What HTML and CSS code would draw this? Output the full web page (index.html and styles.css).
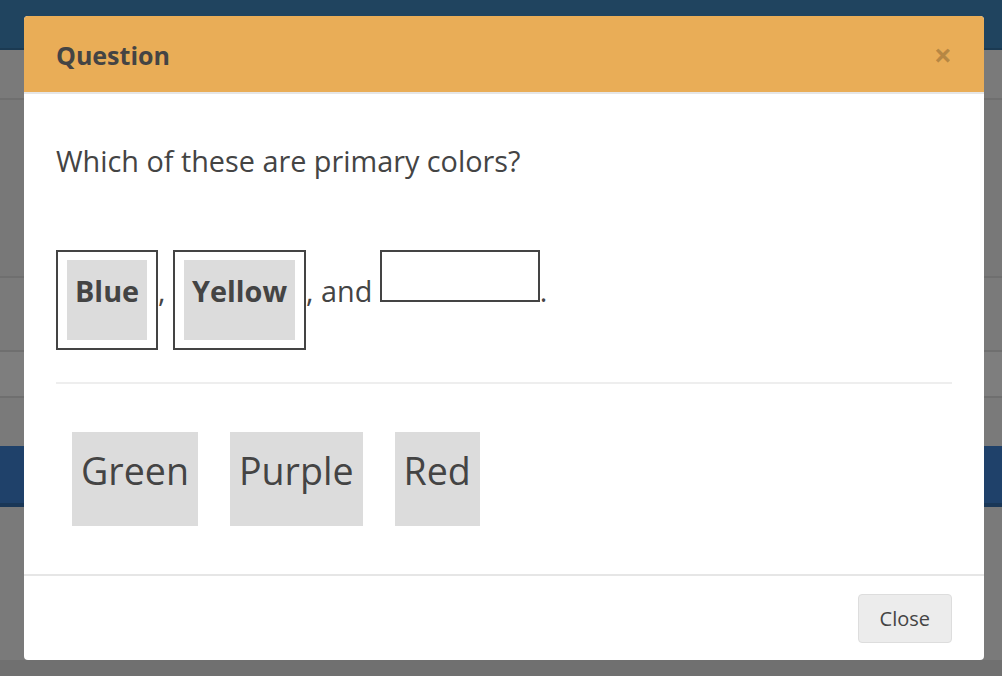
FILE: index.html
```html
<!DOCTYPE html>
<html lang="en">
<head>
<meta charset="utf-8">
<title>Question</title>
<link rel="stylesheet" href="styles.css">
</head>
<body>
<div class="page">
  <div class="stripe nav"></div>
  <div class="stripe nav-edge"></div>
  <div class="stripe row row-a"></div>
  <div class="stripe line"></div>
  <div class="stripe row row-b"></div>
  <div class="stripe line"></div>
  <div class="stripe row row-c"></div>
  <div class="stripe line"></div>
  <div class="stripe row row-d"></div>
  <div class="stripe line"></div>
  <div class="stripe row row-e"></div>
  <div class="stripe band"></div>
  <div class="stripe band-edge"></div>
  <div class="stripe row row-f"></div>
  <div class="stripe row-g"></div>
</div>

<div class="modal">
  <div class="modal-header">
    <h4 class="modal-title">Question</h4>
    <button class="close" type="button">×</button>
  </div>
  <div class="modal-body">
    <p class="question">Which of these are primary colors?</p>
    <div class="blanks"><span class="drop"><span class="chip chip-sm">Blue</span></span>, <span class="drop"><span class="chip chip-sm">Yellow</span></span>, and <span class="drop drop-empty"></span>.</div>
    <hr class="divider">
    <div class="options">
      <span class="chip chip-lg">Green</span>
      <span class="chip chip-lg">Purple</span>
      <span class="chip chip-lg">Red</span>
    </div>
  </div>
  <div class="modal-footer">
    <button class="btn" type="button">Close</button>
  </div>
</div>
</body>
</html>
```

FILE: styles.css
```css
html, body {
  margin: 0;
  padding: 0;
}

body {
  width: 1002px;
  height: 676px;
  overflow: hidden;
  font-family: "Open Sans", "Noto Sans", "Liberation Sans", sans-serif;
  color: #444444;
  background: #7a7a7a;
}

/* dimmed page behind the modal */
.page {
  display: flex;
  flex-direction: column;
  height: 676px;
}

.stripe { flex: none; }
.nav { height: 48px; background: #20445f; }
.nav-edge { height: 2px; background: #1b3a52; }
.line { height: 2px; background: #6f6f6f; }
.row { background: #7a7a7a; }
.row-a { height: 48px; }
.row-b { height: 176px; background: #787878; }
.row-c { height: 72px; background: #7a7a7a; }
.row-d { height: 44px; background: #7e7e7e; }
.row-e { height: 48px; }
.band { height: 57px; background: #1f416a; }
.band-edge { height: 4px; background: #1a3757; }
.row-f { height: 153px; }
.row-g { height: 16px; background: #707070; }

/* modal */
.modal {
  position: absolute;
  left: 24px;
  top: 16px;
  width: 960px;
  background: #ffffff;
  border-radius: 4px;
  overflow: hidden;
}

.modal-header {
  height: 78px;
  box-sizing: border-box;
  padding: 1px 32px 0 32px;
  background: #e9ad57;
  border-bottom: 2px solid #e6e6e6;
  display: flex;
  align-items: center;
  justify-content: space-between;
}

.modal-title {
  margin: 0;
  font-size: 25px;
  font-weight: 700;
  line-height: 34px;
  color: #444444;
}

.close {
  border: 0;
  background: none;
  padding: 0;
  margin-top: 0;
  font-family: "Open Sans", "DejaVu Sans", sans-serif;
  font-size: 32px;
  font-weight: 700;
  line-height: 32px;
  color: rgba(0, 0, 0, 0.22);
  cursor: pointer;
}

.modal-body {
  padding: 46px 32px 48px;
}

.question {
  margin: 0 0 69px;
  font-size: 28.8px;
  line-height: 41px;
}

.blanks {
  font-size: 28.8px;
  line-height: 41px;
}

.drop {
  display: inline-block;
  border: 2px solid #444444;
  padding: 8px 9px;
  vertical-align: baseline;
}

.drop-empty {
  padding: 0;
  box-sizing: border-box;
  width: 160px;
  height: 52px;
}

.chip {
  display: inline-block;
  box-sizing: border-box;
  background: #dcdcdc;
  color: #444444;
}

.chip-sm {
  height: 80px;
  padding: 10px 8px 0;
  font-size: 28.8px;
  line-height: 41px;
  font-weight: 700;
}

.divider {
  margin: 32px 0 48px;
  border: 0;
  border-top: 2px solid #eeeeee;
  height: 0;
}

.options {
  display: flex;
  gap: 32px;
  padding-left: 16px;
}

.chip-lg {
  height: 94px;
  padding: 12px 9px 0;
  font-size: 37.6px;
  line-height: 54px;
  font-weight: 400;
}

.modal-footer {
  border-top: 2px solid #e6e6e6;
  padding: 18px 32px 17px;
  display: flex;
  justify-content: flex-end;
}

.btn {
  font-family: "Open Sans", "Noto Sans", sans-serif;
  font-size: 20px;
  line-height: 29px;
  color: #444444;
  background: #ececec;
  border: 1px solid #dddddd;
  border-radius: 4px;
  padding: 9px 21px;
  cursor: pointer;
}
```
